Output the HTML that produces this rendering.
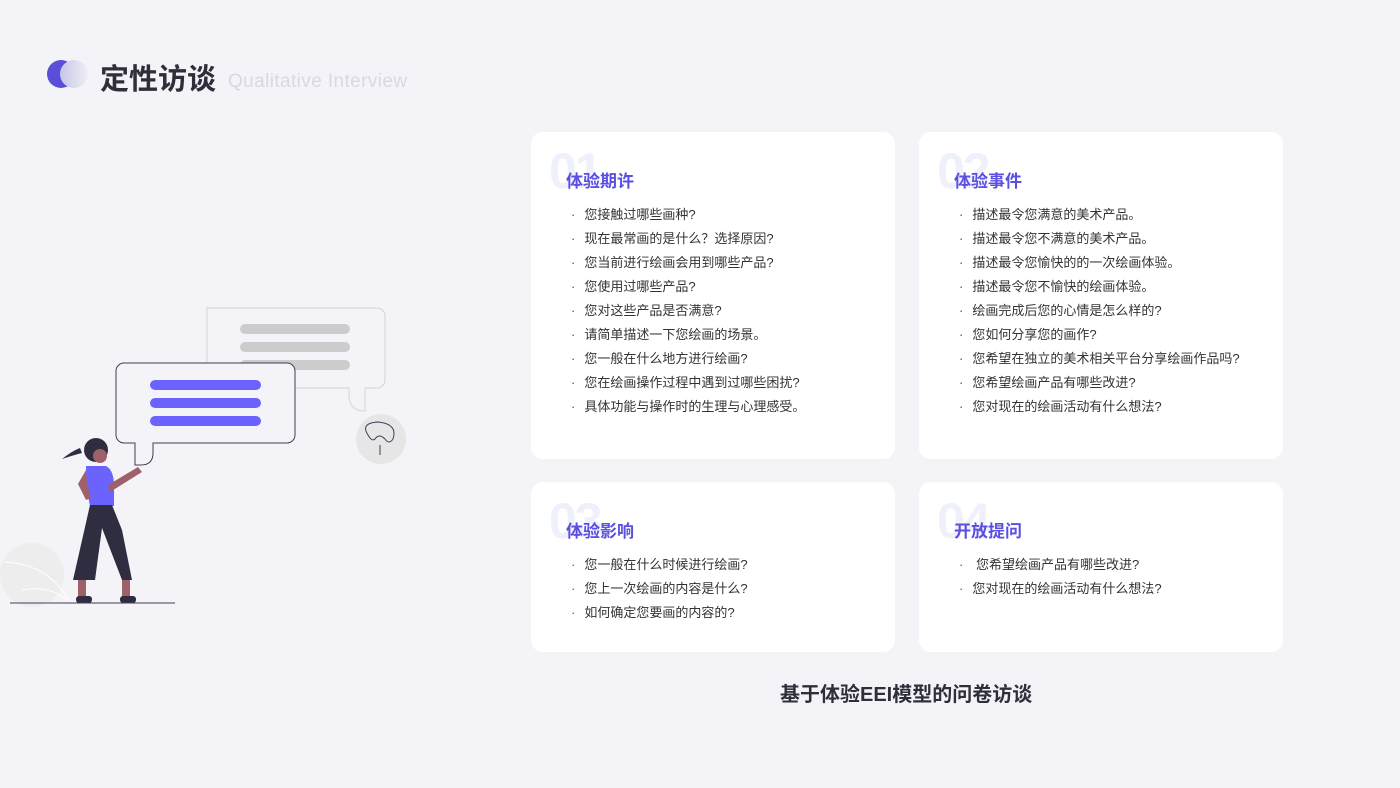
<!DOCTYPE html>
<html><head><meta charset="utf-8"><style>
*{margin:0;padding:0;box-sizing:border-box}
body{width:1400px;height:788px;background:#f4f4f8;position:relative;overflow:hidden;font-family:"Liberation Sans","Noto Sans CJK SC",sans-serif}
.hd{position:absolute;left:100px;top:56px;font-size:29px;font-weight:bold;color:#2e2f3a}
.en{position:absolute;left:228px;top:71px;font-size:19px;color:#d8d9e0;letter-spacing:0.4px}
.card{position:absolute;background:#fff;border-radius:12px;width:364px}
.num{position:absolute;left:18px;top:10px;font-size:50px;font-weight:bold;color:#eef0fb;letter-spacing:-2px}
.t{position:absolute;left:35px;top:35px;font-size:17px;font-weight:bold;color:#5a4fe0}
ul{position:absolute;left:40px;top:71px;list-style:none}
li{font-size:13px;color:#333;height:24px;line-height:24px}
li:before{content:"·";margin-right:9px;color:#555}
.cap{position:absolute;left:780px;top:678px;font-size:20px;font-weight:bold;color:#2e2f3a}
</style></head><body>
<svg style="position:absolute;left:46px;top:59px" width="44" height="30"><circle cx="15" cy="15" r="14" fill="#5a4fd8"/><defs><linearGradient id="g"><stop offset="0" stop-color="#c7c6e8"/><stop offset="1" stop-color="#eeeef6"/></linearGradient></defs><circle cx="28" cy="15" r="14" fill="url(#g)"/></svg>
<div class="hd">定性访谈</div><div class="en">Qualitative Interview</div>
<svg style="position:absolute;left:0;top:300px" width="420" height="320">
<circle cx="32" cy="275" r="32" fill="#ededed"/><path d="M5 262 Q50 265 68 300 M22 290 Q50 285 66 300" stroke="#fff" fill="none"/>
<path d="M207 8h170a8 8 0 0 1 8 8v64a8 8 0 0 1-8 8h-12v23q-16 0-16-16v-7H207z" fill="#f4f4f8" stroke="#d4d4d8"/>
<g stroke="#ccc" stroke-width="10" stroke-linecap="round"><line x1="245" y1="29" x2="345" y2="29"/><line x1="245" y1="47" x2="345" y2="47"/><line x1="245" y1="65" x2="345" y2="65"/></g>
<path d="M124 63h163a8 8 0 0 1 8 8v64a8 8 0 0 1-8 8H153v10q0 12-12 12H135V143h-11a8 8 0 0 1-8-8V71a8 8 0 0 1 8-8z" fill="#f4f4f8" stroke="#3f3d56"/>
<g stroke="#6c63ff" stroke-width="10" stroke-linecap="round"><line x1="155" y1="85" x2="256" y2="85"/><line x1="155" y1="103" x2="256" y2="103"/><line x1="155" y1="121" x2="256" y2="121"/></g>
<circle cx="381" cy="139" r="25" fill="#e6e6e6"/><path d="M368 135q-8-12 10-13 20 2 15 17-4 6-8 0-6-6-10 0-3 3-7-4M380 145v10" stroke="#3f3d56" fill="none"/>
<circle cx="96" cy="150" r="12" fill="#2f2e41"/><path d="M80 148q-8 3-18 11 12-4 20-6z" fill="#2f2e41"/><circle cx="100" cy="156" r="7" fill="#9e616a"/>
<path d="M86 166h20q8 4 8 20v20H90l-4-20z" fill="#6c63ff"/><path d="M108 185l30-18 4 5-32 20z" fill="#9e616a"/>
<path d="M86 170l-8 14 8 16 5-2-4-14z" fill="#9e616a"/>
<path d="M90 205h22l10 25 10 50h-10l-20-52-7 52H73z" fill="#2f2e41"/>
<rect x="78" y="280" width="8" height="18" fill="#9e616a"/><rect x="122" y="280" width="8" height="18" fill="#9e616a"/>
<rect x="76" y="296" width="16" height="7" rx="3" fill="#2f2e41"/><rect x="120" y="296" width="16" height="7" rx="3" fill="#2f2e41"/>
<line x1="10" y1="303" x2="175" y2="303" stroke="#3f3d56"/>
</svg>
<div class="card" style="left:531px;top:132px;height:327px"><div class="num">01</div><div class="t">体验期许</div><ul><li>您接触过哪些画种?</li><li>现在最常画的是什么？选择原因?</li><li>您当前进行绘画会用到哪些产品?</li><li>您使用过哪些产品?</li><li>您对这些产品是否满意?</li><li>请简单描述一下您绘画的场景。</li><li>您一般在什么地方进行绘画?</li><li>您在绘画操作过程中遇到过哪些困扰?</li><li>具体功能与操作时的生理与心理感受。</li></ul></div>
<div class="card" style="left:919px;top:132px;height:327px"><div class="num">02</div><div class="t">体验事件</div><ul><li>描述最令您满意的美术产品。</li><li>描述最令您不满意的美术产品。</li><li>描述最令您愉快的的一次绘画体验。</li><li>描述最令您不愉快的绘画体验。</li><li>绘画完成后您的心情是怎么样的?</li><li>您如何分享您的画作?</li><li>您希望在独立的美术相关平台分享绘画作品吗?</li><li>您希望绘画产品有哪些改进?</li><li>您对现在的绘画活动有什么想法?</li></ul></div>
<div class="card" style="left:531px;top:482px;height:170px"><div class="num">03</div><div class="t">体验影响</div><ul><li>您一般在什么时候进行绘画?</li><li>您上一次绘画的内容是什么?</li><li>如何确定您要画的内容的?</li></ul></div>
<div class="card" style="left:919px;top:482px;height:170px"><div class="num">04</div><div class="t">开放提问</div><ul><li> 您希望绘画产品有哪些改进?</li><li>您对现在的绘画活动有什么想法?</li></ul></div>
<div class="cap">基于体验EEI模型的问卷访谈</div>
</body></html>
